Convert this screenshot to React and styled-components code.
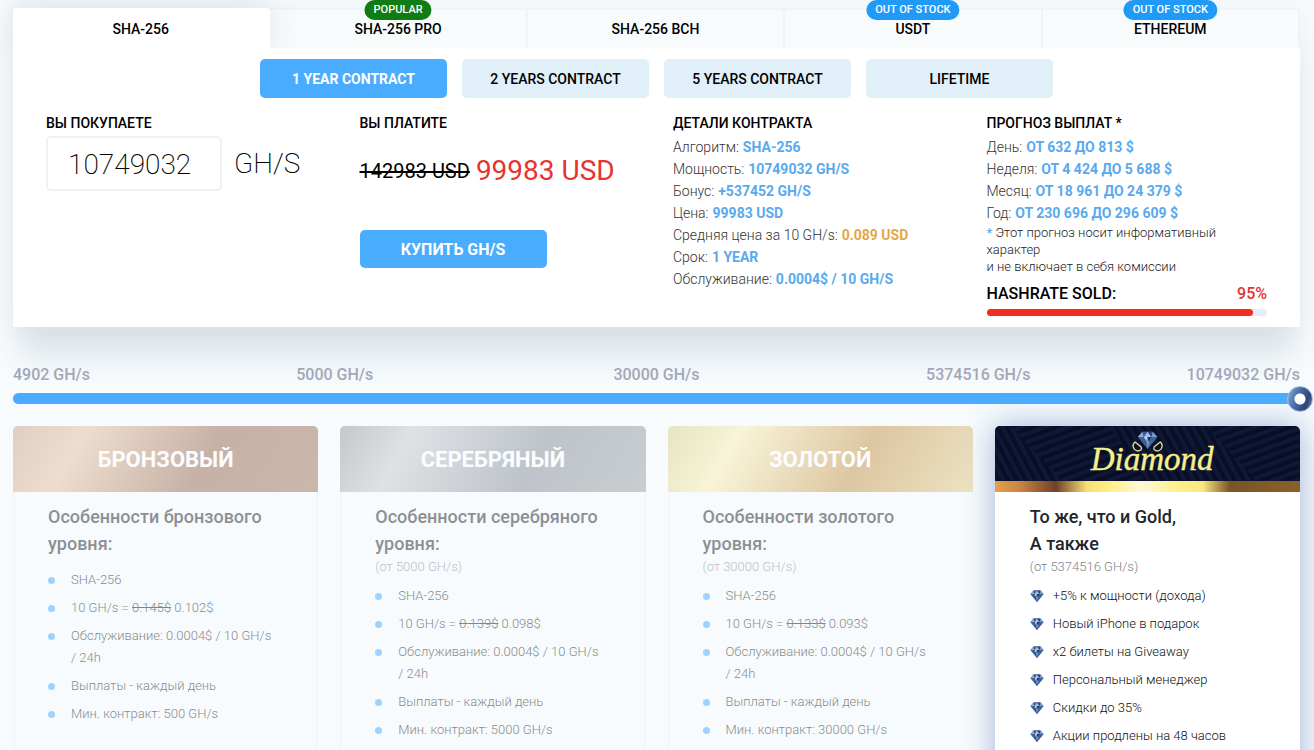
import React, { useState } from "react";
import styled, { createGlobalStyle, css } from "styled-components";

const GlobalStyle = createGlobalStyle`
  * { box-sizing: border-box; }
  html { background: #f7fbfd; }
  body {
    margin: 0;
    font-family: Roboto, "Liberation Sans", sans-serif;
    color: #000;
    overflow: hidden;
    height: 100vh;
  }
  button, input { font-family: inherit; color: inherit; }
`;

const Page = styled.main`
  padding: 8px 14px 0 13px;
`;

const Calculator = styled.section`
  box-shadow: 0 36px 28px -6px rgba(50, 62, 110, 0.12), 0 0 24px rgba(40, 60, 110, 0.05);
  margin-bottom: 38px;
`;

const Tabs = styled.div`
  display: grid;
  grid-template-columns: repeat(5, 1fr);
  height: 40px;
  background: #f7fbfd;
`;

const Tab = styled.button`
  position: relative;
  padding: 0 0 1px;
  border: solid #eff4f6;
  border-width: 2px 2px 0 0;
  background: #f7fbfc;
  font-size: 14px;
  font-weight: 500;
  line-height: 16px;
  cursor: pointer;
  ${(p) =>
    p.$active &&
    css`
      background: #fff;
      border-color: #fff;
      border-radius: 4px 4px 0 0;
      box-shadow: 0 0 32px rgba(40, 60, 110, 0.12);
      z-index: 1;
    `}
`;

const Badge = styled.span`
  position: absolute;
  left: 50%;
  top: -10px;
  transform: translateX(-50%);
  padding: 0 9px;
  border-radius: 10px;
  background: ${(p) => p.$color};
  color: #fff;
  font-size: 11px;
  line-height: 20px;
  white-space: nowrap;
`;

const Panel = styled.div`
  position: relative;
  z-index: 1;
  background: #fff;
  padding: 11px 33px;
`;

const Terms = styled.div`
  display: flex;
  justify-content: center;
  gap: 15px;
`;

const Button = styled.button`
  width: 187px;
  height: ${(p) => (p.$large ? 38 : 39)}px;
  border: 0;
  border-radius: 5px;
  background: ${(p) => (p.$primary ? "#4aacff" : "#e0eff8")};
  color: ${(p) => (p.$primary ? "#fff" : "#000")};
  font-size: ${(p) => (p.$large ? 16 : 14)}px;
  font-weight: ${(p) => (p.$primary ? 700 : 500)};
  cursor: pointer;
`;

const Columns = styled.div`
  display: grid;
  grid-template-columns: repeat(4, 1fr);
  gap: 33px;
  margin-top: 16px;
`;

const Column = styled.div`
  min-width: 0;
`;

const Heading = styled.h2`
  margin: 0;
  font-size: 14px;
  font-weight: 500;
  line-height: 18px;
`;

const Amount = styled.label`
  display: flex;
  align-items: center;
  gap: 12px;
  margin-top: 4px;
  font-size: 28px;
  font-weight: 200;
`;

const AmountInput = styled.input`
  width: 176px;
  height: 55px;
  padding: 2px 20px 0;
  border: 2px solid #edf2f5;
  border-radius: 5px;
  background: #fff;
  font-size: 28px;
  font-weight: 200;
`;

const Price = styled.p`
  display: flex;
  align-items: center;
  gap: 6px;
  margin: 22px 0 42px;
  font-size: 28px;
  line-height: 34px;
  color: #e3342f;
  white-space: nowrap;
`;

const OldPrice = styled.s`
  font-size: 20px;
  color: #000;
`;

const Facts = styled.dl`
  margin: 4px 0 0;
`;

const Fact = styled.div`
  display: flex;
  gap: 4px;
  font-size: 14px;
  line-height: 22px;
  color: #333;
  white-space: nowrap;
`;

const Term = styled.dt`
  font-weight: 300;
`;

const Value = styled.dd`
  margin: 0;
  font-weight: 700;
  color: ${(p) => (p.$gold ? "#e2a844" : "#5aa9ee")};
`;

const Note = styled.p`
  margin: 0;
  font-size: 13px;
  font-weight: 300;
  line-height: 17px;
  color: #222;
`;

const Star = styled.span`
  color: #5aa9ee;
  font-weight: 500;
`;

const Sold = styled.div`
  display: flex;
  justify-content: space-between;
  margin-top: 9px;
  font-size: 16px;
  font-weight: 500;
  line-height: 20px;
`;

const SoldShare = styled.span`
  color: #e3342f;
`;

const SoldTrack = styled.div`
  height: 7px;
  margin-top: 5px;
  border-radius: 4px;
  background: #e0eff8;
`;

const SoldFill = styled.div`
  height: 100%;
  border-radius: 4px;
  background: #f52d20;
`;

const Marks = styled.div`
  position: relative;
  z-index: 1;
  display: grid;
  grid-template-columns: 1fr 2fr 2fr 2fr 1fr;
  font-size: 16px;
  font-weight: 500;
  line-height: 20px;
  color: #a3a7b7;
  white-space: nowrap;
`;

const Mark = styled.span`
  justify-self: center;
  &:first-child { justify-self: start; }
  &:last-child { justify-self: end; }
`;

const Range = styled.input`
  position: relative;
  z-index: 2;
  display: block;
  appearance: none;
  width: calc(100% + 13px);
  height: 26px;
  margin: 0;
  background: transparent;
  &::-webkit-slider-runnable-track {
    height: 11px;
    margin-right: 13px;
    border-radius: 6px;
    background: #4aacff;
  }
  &::-webkit-slider-thumb {
    appearance: none;
    width: 26px;
    height: 26px;
    margin-top: -7px;
    position: relative;
    left: 13px;
    border-radius: 50%;
    border: 1px solid #a9bfdc;
    background:
      radial-gradient(circle, #fff 0 5px, transparent 6px),
      linear-gradient(110deg, #8fb3dc 0%, #5f86bb 25%, #3e619b 50%, #2b4478 75%, #6d8dbd 100%);
  }
`;

const Levels = styled.div`
  display: grid;
  grid-template-columns: repeat(4, 1fr);
  gap: 22px;
  margin-top: 15px;
`;

const Level = styled.article`
  min-width: 0;
  border-radius: 5px;
  ${(p) =>
    p.$active
      ? css`
          background: #fff;
          box-shadow: 0 0 32px rgba(45, 80, 165, 0.42);
        `
      : css`
          opacity: 0.5;
          box-shadow: inset 0 0 0 2px #eff5f8;
        `}
`;

const LevelHead = styled.header`
  display: flex;
  align-items: center;
  justify-content: center;
  height: 66px;
  border-radius: 5px 5px 0 0;
  background: ${(p) => p.$fill};
  color: #fff;
  font-size: 22px;
  font-weight: 700;
`;

const DiamondHead = styled.header`
  border-radius: 5px 5px 0 0;
  overflow: hidden;
`;

const DiamondArt = styled.svg`
  display: block;
  width: 100%;
  height: 55px;
`;

const GoldStrip = styled.div`
  height: 11px;
  background: linear-gradient(90deg, #e2a24c 0%, #c98643 8%, #70402a 20%, #f5df72 30%, #fff08c 38%, #fff8d8 48%, #fff08c 60%, #fbe982 68%, #7a5426 77%, #8a602c 100%);
`;

const LevelBody = styled.div`
  padding: 11px 35px 40px;
`;

const LevelTitle = styled.h3`
  margin: 0;
  font-size: 18px;
  font-weight: 500;
  line-height: 27px;
  color: #22252a;
  white-space: pre-line;
`;

const LevelFrom = styled.p`
  margin: 2px 0 0;
  font-size: 13px;
  font-weight: 300;
  line-height: 16px;
  color: #7f8492;
`;

const Features = styled.ul`
  display: flex;
  flex-direction: column;
  gap: 6px;
  margin: ${(p) => (p.$spaced ? 12 : 10)}px 0 0;
  padding: 0 5px 0 0;
  list-style: none;
`;

const Feature = styled.li`
  display: flex;
  font-size: 13px;
  font-weight: 300;
  line-height: 22px;
  color: #111;
`;

const Marker = styled.span`
  display: flex;
  align-items: center;
  flex: 0 0 23px;
  height: 22px;
`;

const Dot = styled.span`
  width: 7px;
  height: 7px;
  border-radius: 50%;
  background: #4aacff;
`;

const Gem = ({ x, y, w = 14, h = 12 }) => (
  <svg x={x} y={y} width={w} height={h} viewBox="0 0 28 24" aria-hidden="true">
    <path d="M7 1h14l6 7-13 16L1 8z" fill="#2c4a80" />
    <path d="M7 1l-6 7h8z" fill="#8fabd2" />
    <path d="M7 1h7L9 8z" fill="#3c5c94" />
    <path d="M14 1l5 7H9z" fill="#a9c0e2" />
    <path d="M21 1h-7l5 7z" fill="#2b4880" />
    <path d="M21 1l6 7h-8z" fill="#7d9cc8" />
    <path d="M1 8h8l5 16z" fill="#3f629e" />
    <path d="M9 8l3 6 2 10z" fill="#24407a" />
    <path d="M9 8h5l-2 6z" fill="#c0d3ec" />
    <path d="M14 8l-2 6 2 10 2-9z" fill="#7896c8" />
    <path d="M14 8h5l-3 7z" fill="#1d3364" />
    <path d="M19 8l-3 7-2 9z" fill="#92aed6" />
    <path d="M27 8h-8l-5 16z" fill="#41639c" />
  </svg>
);

const TABS = [
  { name: "SHA-256" },
  { name: "SHA-256 PRO", badge: "POPULAR", color: "#0f7d14" },
  { name: "SHA-256 BCH" },
  { name: "USDT", badge: "OUT OF STOCK", color: "#1f9bf7" },
  { name: "ETHEREUM", badge: "OUT OF STOCK", color: "#1f9bf7" },
];

const TERMS = ["1 YEAR CONTRACT", "2 YEARS CONTRACT", "5 YEARS CONTRACT", "LIFETIME"];

const DETAILS = [
  ["Алгоритм:", "SHA-256"],
  ["Мощность:", "10749032 GH/S"],
  ["Бонус:", "+537452 GH/S"],
  ["Цена:", "99983 USD"],
  ["Средняя цена за 10 GH/s:", "0.089 USD", true],
  ["Срок:", "1 YEAR"],
  ["Обслуживание:", "0.0004$ / 10 GH/S"],
];

const FORECAST = [
  ["День:", "ОТ 632 ДО 813 $"],
  ["Неделя:", "ОТ 4 424 ДО 5 688 $"],
  ["Месяц:", "ОТ 18 961 ДО 24 379 $"],
  ["Год:", "ОТ 230 696 ДО 296 609 $"],
];

const MARKS = ["4902 GH/s", "5000 GH/s", "30000 GH/s", "5374516 GH/s", "10749032 GH/s"];

const LEVELS = [
  {
    name: "БРОНЗОВЫЙ",
    fill: "linear-gradient(120deg, #cba28a 0%, #e6c0a0 22%, #976a52 62%, #a1745f 100%)",
    title: "Особенности бронзового уровня:",
    was: "0.145$",
    now: "0.102$",
    min: "500",
  },
  {
    name: "СЕРЕБРЯНЫЙ",
    fill: "linear-gradient(120deg, #92969a 0%, #c5cace 22%, #888e9a 62%, #9aa0a4 100%)",
    title: "Особенности серебряного уровня:",
    from: "(от 5000 GH/s)",
    was: "0.139$",
    now: "0.098$",
    min: "5000",
  },
  {
    name: "ЗОЛОТОЙ",
    fill: "linear-gradient(120deg, #d6cf86 0%, #faefb4 22%, #c5934a 62%, #e3cb8a 100%)",
    title: "Особенности золотого уровня:",
    from: "(от 30000 GH/s)",
    was: "0.133$",
    now: "0.093$",
    min: "30000",
  },
];

const PERKS = [
  "+5% к мощности (дохода)",
  "Новый iPhone в подарок",
  "x2 билеты на Giveaway",
  "Персональный менеджер",
  "Скидки до 35%",
  "Акции продлены на 48 часов",
];

const FactList = ({ items }) => (
  <Facts>
    {items.map(([term, value, gold]) => (
      <Fact key={term}>
        <Term>{term}</Term>
        <Value $gold={gold}>{value}</Value>
      </Fact>
    ))}
  </Facts>
);

const LevelCard = ({ level }) => (
  <Level>
    <LevelHead $fill={level.fill}>{level.name}</LevelHead>
    <LevelBody>
      <LevelTitle>{level.title}</LevelTitle>
      {level.from && <LevelFrom>{level.from}</LevelFrom>}
      <Features $spaced={!level.from}>
        {[
          "SHA-256",
          <>10 GH/s = <s>{level.was}</s> {level.now}</>,
          "Обслуживание: 0.0004$ / 10 GH/s / 24h",
          "Выплаты - каждый день",
          `Мин. контракт: ${level.min} GH/s`,
        ].map((text, i) => (
          <Feature key={i}>
            <Marker><Dot /></Marker>
            <span>{text}</span>
          </Feature>
        ))}
      </Features>
    </LevelBody>
  </Level>
);

const DiamondCard = () => (
  <Level $active>
    <DiamondHead>
      <DiamondArt viewBox="0 0 305 55" preserveAspectRatio="xMidYMid slice">
        <defs>
          <pattern id="rayA" width="60" height="8" patternUnits="userSpaceOnUse" patternTransform="rotate(-20)">
            <rect width="60" height="8" fill="#080e24" />
            <rect width="60" height="4" fill="#0f1836" />
          </pattern>
          <pattern id="rayB" width="60" height="8" patternUnits="userSpaceOnUse" patternTransform="rotate(62)">
            <rect width="60" height="8" fill="#080e24" />
            <rect width="60" height="4" fill="#0f1836" />
          </pattern>
        </defs>
        <rect x="-100" width="505" height="55" fill="url(#rayA)" />
        <path d="M-100 0H15L68 55H-100zM115 0h95l52 55H150z" fill="url(#rayB)" />
        <text x="157" y="44" textAnchor="middle" fontFamily="'Liberation Serif', serif" fontStyle="italic" fontSize="33" fill="#f7f08a" stroke="#f7f08a" strokeWidth="0.4">Diamond</text>
        <Gem x={141} y={5} w={23} h={18} />
        <path d="M140 16c-3 2-3 7 2 9 4 0 5-2 4-4zM165 16c3 2 3 7-2 9-4 0-5-2-4-4z" fill="#0b1129" stroke="#e8d99a" strokeWidth="1.3" />
      </DiamondArt>
      <GoldStrip />
    </DiamondHead>
    <LevelBody>
      <LevelTitle>{"То же, что и Gold,\nА также"}</LevelTitle>
      <LevelFrom>(от 5374516 GH/s)</LevelFrom>
      <Features>
        {PERKS.map((perk) => (
          <Feature key={perk}>
            <Marker><Gem /></Marker>
            <span>{perk}</span>
          </Feature>
        ))}
      </Features>
    </LevelBody>
  </Level>
);

export default function App() {
  const [tab, setTab] = useState(0);
  const [term, setTerm] = useState(0);
  const [amount, setAmount] = useState("10749032");
  return (
    <>
      <GlobalStyle />
      <Page>
        <Calculator>
          <Tabs>
            {TABS.map((t, i) => (
              <Tab key={t.name} $active={i === tab} onClick={() => setTab(i)}>
                {t.badge && <Badge $color={t.color}>{t.badge}</Badge>}
                {t.name}
              </Tab>
            ))}
          </Tabs>
          <Panel>
            <Terms>
              {TERMS.map((t, i) => (
                <Button key={t} $primary={i === term} onClick={() => setTerm(i)}>{t}</Button>
              ))}
            </Terms>
            <Columns>
              <Column>
                <Heading id="buy-heading">ВЫ ПОКУПАЕТЕ</Heading>
                <Amount>
                  <AmountInput
                    type="text"
                    aria-labelledby="buy-heading"
                    value={amount}
                    onChange={(e) => setAmount(e.target.value)}
                  />
                  GH/S
                </Amount>
              </Column>
              <Column>
                <Heading>ВЫ ПЛАТИТЕ</Heading>
                <Price>
                  <OldPrice>142983 USD</OldPrice>
                  <span>99983 USD</span>
                </Price>
                <Button $primary $large>КУПИТЬ GH/S</Button>
              </Column>
              <Column>
                <Heading>ДЕТАЛИ КОНТРАКТА</Heading>
                <FactList items={DETAILS} />
              </Column>
              <Column>
                <Heading>ПРОГНОЗ ВЫПЛАТ *</Heading>
                <FactList items={FORECAST} />
                <Note>
                  <Star>*</Star> Этот прогноз носит информативный характер
                  <br />и не включает в себя комиссии
                </Note>
                <Sold>
                  <span>HASHRATE SOLD:</span>
                  <SoldShare>95%</SoldShare>
                </Sold>
                <SoldTrack>
                  <SoldFill style={{ width: "95%" }} />
                </SoldTrack>
              </Column>
            </Columns>
          </Panel>
        </Calculator>
        <Marks>
          {MARKS.map((m) => (
            <Mark key={m}>{m}</Mark>
          ))}
        </Marks>
        <Range type="range" aria-label="GH/s" min="4902" max="10749032" value={Number(amount) || 4902} onChange={(e) => setAmount(e.target.value)} />
        <Levels>
          {LEVELS.map((level) => (
            <LevelCard key={level.name} level={level} />
          ))}
          <DiamondCard />
        </Levels>
      </Page>
    </>
  );
}
